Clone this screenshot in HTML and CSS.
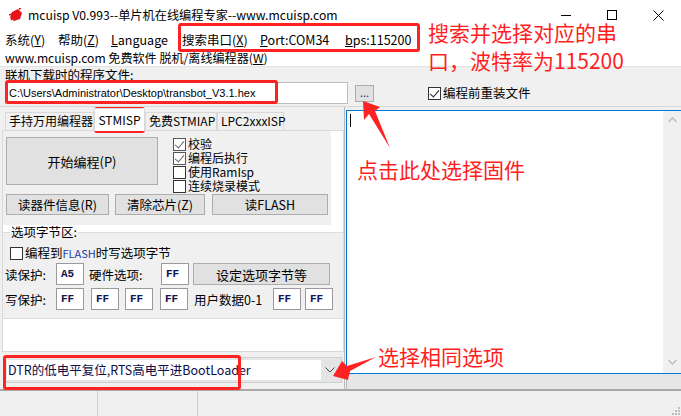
FILE: index.html
```html
<!DOCTYPE html>
<html lang="zh-CN">
<head>
    <meta charset="UTF-8">
    <title>mcuisp V0.993</title>
    <link rel="stylesheet" href="styles.css">
</head>
<body>
<div class="app">
    <!-- Title bar -->
    <div class="titlebar">
        <svg class="app-icon" width="14" height="14" viewBox="0 0 14 14">
            <path d="M3 4 L9 1 L13 5 L11 11 L5 13 L1 10 Z" fill="#e8141c"/>
            <path d="M0 7 L3 6 M2 12 L4 10 M10 1 L12 0" stroke="#e8141c" stroke-width="1.5"/>
        </svg>
        <span class="title">mcuisp V0.993--单片机在线编程专家--www.mcuisp.com</span>
        <div class="win-ctrls">
            <span class="wc"><svg width="10" height="10" viewBox="0 0 10 10"><path d="M0 5.5 H10" stroke="#000"/></svg></span>
            <span class="wc"><svg width="10" height="10" viewBox="0 0 10 10"><rect x="0.5" y="0.5" width="9" height="9" fill="none" stroke="#000"/></svg></span>
            <span class="wc"><svg width="11" height="11" viewBox="0 0 11 11"><path d="M0.5 0.5 L10.5 10.5 M10.5 0.5 L0.5 10.5" stroke="#000"/></svg></span>
        </div>
    </div>

    <!-- Menus -->
    <div class="menubar">
        <span class="mi w1">系统(<u>Y</u>)</span>
        <span class="mi w2">帮助(<u>Z</u>)</span>
        <span class="mi w3"><u>L</u>anguage</span>
        <span class="mi w4">搜索串口(<u>X</u>)</span>
        <span class="mi w5"><u>P</u>ort:COM34</span>
        <span class="mi"><u>b</u>ps:115200</span>
    </div>
    <div class="menubar2">www.mcuisp.com 免费软件 脱机/离线编程器(<u>W</u>)</div>

    <!-- File chooser -->
    <div class="filebox">
        <div class="file-label">联机下载时的程序文件:</div>
        <div class="file-row">
            <div class="path-input">C:\Users\Administrator\Desktop\transbot_V3.1.hex</div>
            <div class="browse">...</div>
            <div class="check reload"><span class="cb on"></span>编程前重装文件</div>
        </div>
    </div>

    <div class="main">
        <div class="left">
            <div class="tabs">
                <span class="tab">手持万用编程器</span>
                <span class="tab active">STMISP</span>
                <span class="tab">免费STMIAP</span>
                <span class="tab">LPC2xxxISP</span>
            </div>
            <div class="page">
                <div class="page-top">
                    <div class="top-row">
                        <div class="btn big">开始编程(P)</div>
                        <div class="checks">
                            <div class="check"><span class="cb on grey"></span>校验</div>
                            <div class="check"><span class="cb on grey"></span>编程后执行</div>
                            <div class="check"><span class="cb"></span>使用RamIsp</div>
                            <div class="check"><span class="cb"></span>连续烧录模式</div>
                        </div>
                    </div>
                    <div class="btn-row">
                        <div class="btn b1">读器件信息(R)</div>
                        <div class="btn b2">清除芯片(Z)</div>
                        <div class="btn b3">读FLASH</div>
                    </div>
                </div>
                <fieldset class="group">
                    <legend>选项字节区:</legend>
                    <div class="check opt"><span class="cb"></span>编程到<span class="blue">FLASH</span>时写选项字节</div>
                    <div class="opt-row">
                        <span class="lbl l1">读保护:</span>
                        <span class="hex">A5</span>
                        <span class="lbl l2">硬件选项:</span>
                        <span class="hex">FF</span>
                        <div class="btn set">设定选项字节等</div>
                    </div>
                    <div class="opt-row">
                        <span class="lbl l1">写保护:</span>
                        <span class="hex">FF</span>
                        <span class="hex g7">FF</span>
                        <span class="hex g6">FF</span>
                        <span class="hex g7">FF</span>
                        <span class="lbl l3">用户数据0-1</span>
                        <span class="hex">FF</span>
                        <span class="hex g4">FF</span>
                    </div>
                </fieldset>
            </div>
            <div class="combo">
                <div class="combo-text">DTR的低电平复位,RTS高电平进BootLoader</div>
                <div class="combo-btn">
                    <svg width="10" height="6" viewBox="0 0 10 6"><path d="M0.5 0.5 L5 5 L9.5 0.5" fill="none" stroke="#444"/></svg>
                </div>
            </div>
        </div>
        <div class="right">
            <div class="memo">
                <div class="memo-text"><span class="caret"></span></div>
                <div class="scrollbar">
                    <svg width="9" height="6" viewBox="0 0 9 6"><path d="M0.5 5 L4.5 1 L8.5 5" fill="none" stroke="#bdbdbd" stroke-width="1.5"/></svg>
                    <svg width="9" height="6" viewBox="0 0 9 6"><path d="M0.5 1 L4.5 5 L8.5 1" fill="none" stroke="#bdbdbd" stroke-width="1.5"/></svg>
                </div>
            </div>
            <div class="memo-foot"></div>
        </div>
    </div>

    <div class="statusbar">
        <span class="sb-cell c1"></span>
        <span class="sb-cell c2"></span>
        <svg class="grip" width="10" height="10" viewBox="0 0 10 10">
            <rect x="8" y="2" width="2" height="2" fill="#bdbdbd"/>
            <rect x="5" y="5" width="2" height="2" fill="#bdbdbd"/>
            <rect x="8" y="5" width="2" height="2" fill="#bdbdbd"/>
            <rect x="2" y="8" width="2" height="2" fill="#bdbdbd"/>
            <rect x="5" y="8" width="2" height="2" fill="#bdbdbd"/>
            <rect x="8" y="8" width="2" height="2" fill="#bdbdbd"/>
        </svg>
    </div>

    <!-- Annotations drawn over the window -->
    <div class="mark m-menu"></div>
    <div class="mark m-path"></div>
    <div class="mark m-tab"></div>
    <div class="mark m-combo"></div>
    <div class="note n-port">搜索并选择对应的串<br>口，波特率为115200</div>
    <div class="note n-file">点击此处选择固件</div>
    <div class="note n-opt">选择相同选项</div>
    <svg class="arrows" width="681" height="416" viewBox="0 0 681 416">
        <polygon points="363,101 380,107 375,111 390,148 369,114 364,120" fill="#f22"/>
        <polygon points="333,376 342,361 347,366 376,357 350,371 348,380" fill="#f22"/>
    </svg>
</div>
</body>
</html>
```

FILE: styles.css
```css
/* Base */
* {
    margin: 0;
    padding: 0;
    box-sizing: border-box;
}

body {
    font-family: "Noto Sans CJK SC", sans-serif;
    font-size: 12px;
    color: #000;
    background: #f0f0f0;
}

.app {
    position: relative;
    width: 681px;
    height: 416px;
    overflow: hidden;
    background: #f0f0f0;
}

u {
    text-decoration: underline;
    text-underline-offset: 1px;
}

/* Title bar */
.titlebar {
    display: flex;
    align-items: center;
    height: 30px;
    background: #fff;
}

.app-icon {
    margin-left: 9px;
}

.title {
    margin-left: 5px;
    font-size: 12.2px;
    line-height: 18px;
    padding-bottom: 1px;
}

.win-ctrls {
    display: flex;
    margin-left: auto;
    align-self: stretch;
}

.wc {
    display: flex;
    align-items: center;
    justify-content: center;
    width: 46px;
}

/* Menus */
.menubar {
    display: flex;
    height: 20px;
    padding-left: 5px;
    align-items: center;
    background: #fff;
    font-size: 12.5px;
    line-height: 16px;
}

.mi { white-space: nowrap; }
.w1 { width: 53px; }
.w2 { width: 53px; }
.w3 { width: 71px; }
.w4 { width: 78px; }
.w5 { width: 85px; }

.menubar2 {
    height: 16px;
    padding-left: 5px;
    line-height: 15px;
    background: #fff;
    font-size: 12.1px;
}

/* File row */
.filebox {
    height: 41px;
    border-top: 1px solid #e3e3e3;
    border-bottom: 1px solid #d9d9d9;
}

.file-label {
    padding: 1px 0 0 5px;
    height: 15px;
    line-height: 14px;
    font-size: 12.5px;
}

.file-row {
    display: flex;
    align-items: center;
    height: 22px;
}

.path-input {
    width: 343px;
    height: 22px;
    margin-left: 5px;
    padding-left: 3px;
    border: 1px solid #bdbdbd;
    background: #fff;
    font-family: "Liberation Sans", sans-serif;
    font-size: 11px;
    line-height: 20px;
    white-space: nowrap;
    overflow: hidden;
}

.browse {
    width: 19px;
    height: 17px;
    margin-left: 7px;
    border: 1px solid #adadad;
    background: #e1e1e1;
    color: #2a1a8a;
    font-size: 11px;
    line-height: 12px;
    text-align: center;
}

.check {
    display: flex;
    align-items: center;
    height: 14px;
    font-size: 12.5px;
    line-height: 14px;
    white-space: nowrap;
}

.reload {
    margin-left: 54px;
}

.cb {
    position: relative;
    width: 13px;
    height: 13px;
    margin-right: 2px;
    border: 1px solid #333;
    background: #fff;
    flex: none;
}

.cb.on::after {
    content: "";
    position: absolute;
    left: 3px;
    top: 0;
    width: 4px;
    height: 8px;
    border: solid #222;
    border-width: 0 1.5px 1.5px 0;
    transform: rotate(40deg);
}

.cb.grey {
    border-color: #555;
}

.cb.grey::after {
    border-color: #666;
}

/* Main area */
.main {
    display: flex;
    height: 282px;
}

.left {
    width: 345px;
    border-right: 1px solid #b9b9b9;
}

.tabs {
    display: flex;
    align-items: flex-end;
    height: 23px;
    padding-left: 5px;
}

.tab {
    height: 18px;
    padding: 0 3px;
    border: 1px solid #d9d9d9;
    border-bottom: none;
    background: #f0f0f0;
    font-size: 12px;
    line-height: 16px;
    white-space: nowrap;
}

.tab:nth-child(1) { width: 89px; }
.tab:nth-child(3) { width: 72px; }
.tab:nth-child(4) { width: 67px; text-align: center; }

.tab.active {
    width: 51px;
    height: 23px;
    margin-bottom: -1px;
    background: #fff;
    line-height: 22px;
    text-align: center;
    position: relative;
    z-index: 1;
}

.page {
    height: 222px;
    margin-left: 2px;
    border: 1px solid #d9d9d9;
    background: #fff;
}

.page-top {
    width: 328px;
    height: 94px;
    padding: 6px 0 0 3px;
    background: #f0f0f0;
}

.top-row {
    display: flex;
    height: 56px;
}

.btn {
    display: flex;
    align-items: center;
    justify-content: center;
    border: 1px solid #adadad;
    background: #e1e1e1;
    font-size: 12.5px;
    white-space: nowrap;
}

.btn.big {
    width: 152px;
    height: 48px;
    font-size: 13px;
}

.checks {
    margin-left: 15px;
}

.checks .check {
    height: 14px;
    font-size: 12px;
    line-height: 14px;
}

.btn-row {
    display: flex;
    margin-top: 1px;
}

.btn-row .btn {
    height: 21px;
}

.b1 { width: 103px; }
.b2 { width: 90px; margin-left: 6px; }
.b3 { width: 116px; margin-left: 7px; }

/* Option bytes group */
.group {
    width: 341px;
    height: 94px;
    padding: 0 0 0 1px;
    border: 1px solid #dcdcdc;
    border-left: none;
    background: #f0f0f0;
}

.group legend {
    margin-left: 6px;
    padding: 0 1px;
    font-size: 12.5px;
    line-height: 14px;
}

.check.opt {
    margin: 7px 0 0 6px;
}

.blue {
    color: #1a3aa8;
    font-size: 11px;
}

.opt-row {
    display: flex;
    align-items: center;
    height: 22px;
    margin-top: 3px;
}

.lbl {
    font-size: 12.5px;
    white-space: nowrap;
}

.l1 { width: 52px; padding-left: 1px; }
.l2 { width: 72px; margin-left: 5px; }
.l3 { width: 79px; margin-left: 6px; }

.hex {
    width: 28px;
    height: 22px;
    padding-left: 4px;
    border: 1px solid #9a9a9a;
    background: #fff;
    color: #141450;
    font-family: "Liberation Mono", monospace;
    font-size: 11px;
    font-weight: bold;
    line-height: 20px;
}

.g7 { margin-left: 7px; }
.g6 { margin-left: 6px; }
.g4 { margin-left: 4px; }

.btn.set {
    width: 137px;
    height: 22px;
    margin-left: 4px;
    font-size: 13px;
}

/* Combo box */
.combo {
    display: flex;
    width: 338px;
    height: 26px;
    margin: 5px 0 0 4px;
    padding: 2px;
    border: 1px solid #cfcfcf;
    background: #e5e5e5;
}

.combo-text {
    flex: 1;
    padding-left: 1px;
    background: #fff;
    color: #0c0c48;
    font-size: 12.5px;
    line-height: 20px;
    white-space: nowrap;
}

.combo-btn {
    display: flex;
    align-items: center;
    justify-content: center;
    width: 18px;
}

/* Right memo */
.right {
    flex: 1;
    display: flex;
    flex-direction: column;
}

.memo {
    display: flex;
    height: 264px;
    margin: 3px 0 0 1px;
    border: 1px solid #0078d7;
    border-right: none;
    background: #fff;
}

.memo-text {
    flex: 1;
    padding: 3px 0 0 3px;
}

.caret {
    display: block;
    width: 1px;
    height: 13px;
    background: #000;
}

.scrollbar {
    display: flex;
    flex-direction: column;
    justify-content: space-between;
    align-items: center;
    width: 18px;
    padding: 6px 0 8px;
    background: #f0f0f0;
}

.memo-foot {
    flex: 1;
    margin-left: 1px;
    border-left: 1px solid #b9b9b9;
    background: #e6e6e6;
}

/* Status bar */
.statusbar {
    position: relative;
    display: flex;
    height: 27px;
    border-top: 2px solid #a8a8a8;
}

.sb-cell {
    border-right: 1px solid #cfcfcf;
}

.c1 { width: 98px; }
.c2 { width: 100px; }

.grip {
    position: absolute;
    right: 1px;
    bottom: 1px;
}

/* Annotations */
.mark {
    position: absolute;
    border: 3px solid #f22;
    border-radius: 3px;
}

.m-menu { left: 178px; top: 23px; width: 242px; height: 29px; }
.m-path { left: 5px; top: 80px; width: 273px; height: 24px; }
.m-tab { left: 94px; top: 107px; width: 51px; height: 26px; }
.m-combo { left: 3px; top: 355px; width: 238px; height: 35px; }

.note {
    position: absolute;
    color: #ff1e1e;
    font-family: "Noto Sans CJK SC", sans-serif;
    font-size: 21px;
    line-height: 28px;
    white-space: nowrap;
}

.n-port { left: 428px; top: 18px; }
.n-file { left: 357px; top: 155px; }
.n-opt { left: 378px; top: 342px; }

.arrows {
    position: absolute;
    left: 0;
    top: 0;
    pointer-events: none;
}
```
